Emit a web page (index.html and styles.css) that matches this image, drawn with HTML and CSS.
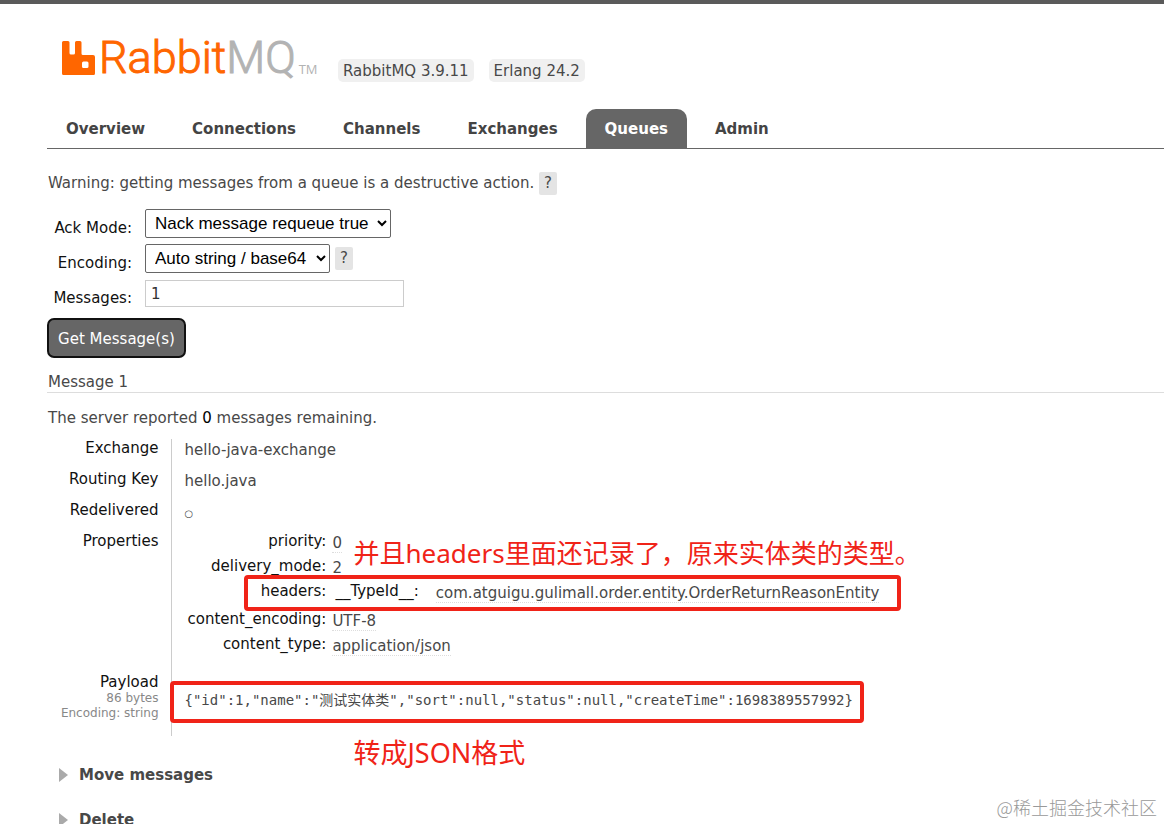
FILE: index.html
```html
<!DOCTYPE html>
<html lang="en">
<head>
<meta charset="utf-8">
<title>RabbitMQ Management</title>
<link rel="stylesheet" href="styles.css">
</head>
<body>
<header class="header">
  <a class="logo" href="#" aria-label="RabbitMQ">
    <svg class="logo-mark" viewBox="0 0 33 34" width="33" height="34" aria-hidden="true">
      <path fill="#ff6600" fill-rule="evenodd" d="M1.500 0H6Q7.500 0 7.500 1.500V12Q7.500 13.500 9 13.500H11.500Q13 13.500 13 12V1.500Q13 0 14.500 0H18Q19.500 0 19.500 1.500V12.500Q19.500 14 21 14H31Q33 14 33 16V32.500Q33 34 31.500 34H1.500Q0 34 0 32.500V1.500Q0 0 1.500 0ZM21.500 20.500Q20 20.500 20 22V25.500Q20 27 21.500 27H25Q26.500 27 26.500 25.500V22Q26.500 20.500 25 20.500Z"/>
    </svg>
    <span class="logo-text">Rabbit<span class="logo-mq">MQ</span></span>
    <span class="logo-tm">TM</span>
  </a>
  <div class="versions"><span class="version">RabbitMQ 3.9.11</span><span class="version">Erlang 24.2</span></div>
</header>
<nav class="tabs">
  <a class="tab" href="#">Overview</a>
  <a class="tab" href="#">Connections</a>
  <a class="tab" href="#">Channels</a>
  <a class="tab" href="#">Exchanges</a>
  <a class="tab tab-selected" href="#">Queues</a>
  <a class="tab" href="#">Admin</a>
</nav>
<main class="main">
  <p class="warning">Warning: getting messages from a queue is a destructive action. <button class="help" type="button">?</button></p>
  <form class="form">
    <div class="fields">
      <label for="ack">Ack Mode:</label>
      <div class="field"><select id="ack"><option>Nack message requeue true</option></select></div>
      <label for="enc">Encoding:</label>
      <div class="field"><select id="enc"><option>Auto string / base64</option></select><button class="help" type="button">?</button></div>
      <label for="count">Messages:</label>
      <div class="field"><input id="count" type="text" value="1"></div>
    </div>
    <button class="submit" type="button">Get Message(s)</button>
  </form>
  <h3 class="message-title">Message 1</h3>
  <p class="remaining">The server reported <b>0</b> messages remaining.</p>
  <table class="facts">
    <tr><th>Exchange</th><td>hello-java-exchange</td></tr>
    <tr><th>Routing Key</th><td>hello.java</td></tr>
    <tr><th>Redelivered</th><td><span class="ring">○</span></td></tr>
    <tr><th>Properties</th><td class="nested">
      <table class="props">
        <tr><th>priority:</th><td><abbr>0</abbr></td></tr>
        <tr><th>delivery_mode:</th><td><abbr>2</abbr></td></tr>
        <tr class="headers-row"><th>headers:</th><td class="nested">
          <table class="props"><tr><th>__TypeId__:</th><td><abbr>com.atguigu.gulimall.order.entity.OrderReturnReasonEntity</abbr></td></tr></table>
        </td></tr>
        <tr><th>content_encoding:</th><td><abbr>UTF-8</abbr></td></tr>
        <tr><th>content_type:</th><td><abbr>application/json</abbr></td></tr>
      </table>
      <span class="frame frame-headers"></span>
      <span class="note note-headers">并且headers里面还记录了，原来实体类的类型。</span>
    </td></tr>
    <tr class="payload-row"><th>Payload<small>86 bytes</small><small>Encoding: string</small></th><td class="payload-cell">
      <pre class="payload">{"id":1,"name":"测试实体类","sort":null,"status":null,"createTime":1698389557992}</pre>
      <span class="frame frame-payload"></span>
      <span class="note note-payload">转成JSON格式</span>
    </td></tr>
  </table>
  <h2 class="section">Move messages</h2>
  <h2 class="section">Delete</h2>
</main>
<div class="watermark">@稀土掘金技术社区</div>
</body>
</html>
```
FILE: styles.css
```css
* { box-sizing: border-box; }
html { height: 100%; overflow: hidden; }
body {
  margin: 0;
  height: 100%;
  overflow: hidden;
  padding-left: 47px;
  border-top: 4px solid #5a5a5a;
  background: #fff;
  color: #484848;
  font: 15px/18px Verdana, "DejaVu Sans", "Noto Sans CJK SC", sans-serif;
}
p, h2, h3, pre { margin: 0; font-size: 15px; }

.header { display: flex; align-items: flex-end; padding: 28px 0 0 15px; height: 78px; }
.logo { display: flex; align-items: flex-end; text-decoration: none; width: 261px; margin-right: 15px; }
.logo-mark { margin: 0 4px 7px 0; flex: none; }
.logo-text { font: 300 45px/48px "Roboto", sans-serif; color: #ff6600; -webkit-text-stroke: 1px; }
.logo-mq { color: #b3b3b3; }
.logo-tm { font: 13px/16px "Open Sans", sans-serif; color: #b3b3b3; margin: 0 0 5px 3px; }
.versions { display: flex; gap: 15px; }
.version { background: #f0f0f0; border-radius: 5px; padding: 4px 5px 2px; line-height: 17px; }

.tabs { display: flex; align-items: flex-end; border-bottom: 1px solid #666; margin-top: 27px; }
.tab { padding: 11px 19px 10px; margin-right: 9px; color: #444; font-weight: bold; text-decoration: none; border-radius: 10px 10px 0 0; }
.tab-selected { background: #666; color: #fff; }

.main { padding-left: 1px; }
.warning { padding-top: 23px; line-height: 23px; }
.help { border: 0; border-radius: 2px; background: #e4e4e4; color: #484848; font: 15px/19px Verdana, "DejaVu Sans", sans-serif; width: 18px; height: 23px; padding: 2px 0; }
.fields { display: grid; grid-template-columns: 84px 1fr; grid-auto-rows: 35px; column-gap: 13px; margin-top: 11px; }
.fields label { color: #111; text-align: right; padding-top: 13px; }
.field { display: flex; align-items: center; gap: 5px; }
select { height: 29px; border: 1px solid #666; border-radius: 2px; background: #fff; color: #000; font: 17px "Liberation Sans", Arial, sans-serif; padding: 0 0 0 5px; }
#ack { width: 246px; }
#enc { width: 185px; }
input { width: 259px; height: 27px; border: 1px solid #ccc; padding: 2px 5px; color: #333; font: 15px Verdana, "DejaVu Sans", sans-serif; }
.submit { margin: 7px 0 0 -1px; height: 40px; width: 139px; padding: 2px 0 0; border: 2px solid #111; border-radius: 7px; background: #666; color: #fff; font: 15px Verdana, "DejaVu Sans", sans-serif; }
.message-title { font-weight: normal; margin: 15px 0 0 -1px; padding: 0 0 1px 1px; border-bottom: 1px solid #ddd; }
.remaining { margin-top: 16px; }
.remaining b { font-weight: normal; color: #000; }

table { border-collapse: collapse; }
th, td { padding: 0; vertical-align: top; font-weight: normal; }
th { color: #111; text-align: right; }
.facts { margin-top: 12px; }
.facts > tbody > tr { height: 31px; }
.facts > tbody > tr > th { width: 123px; padding-right: 12px; border-right: 1px solid #ccc; }
.facts > tbody > tr > td { padding: 2px 0 0 13px; position: relative; }
.facts td.nested { padding: 0; }
.facts > tbody > tr > td.nested { padding: 0 0 13px 16px; }
.props tr { height: 25px; }
.props .headers-row { height: 28px; }
.props td { padding: 2px 0 0 6px; }
.props .props { margin-left: 9px; }
.props .props td { padding-left: 17px; }
abbr { border-bottom: 1px dotted #ddd; }
.ring { font-size: 10px; }
small { display: block; color: #888; font-size: 12px; line-height: 15px; }
.facts > tbody > .payload-row { height: 63px; }
.facts > tbody > tr > .payload-cell { padding-top: 18px; }
.payload { font: 14px/18px "DejaVu Sans Mono", "Noto Sans CJK SC", monospace; }

.frame { position: absolute; border: 4px solid #f02318; border-radius: 4px; }
.frame-headers { left: 72px; top: 43px; width: 657px; height: 36px; }
.frame-payload { left: -2px; top: 8px; width: 694px; height: 42px; }
.note { position: absolute; left: 182px; color: #f02318; font: 26px/32px "Noto Sans", "Noto Sans CJK SC", sans-serif; white-space: nowrap; }
.note-headers { top: 5px; }
.note-payload { top: 64px; font-size: 27px; }

.section { display: flex; align-items: center; gap: 11px; margin: 30px 0 0 11px; line-height: 18px; }
.section + .section { margin-top: 27px; }
.section::before { content: ""; border-left: 9px solid #aaa; border-top: 7px solid transparent; border-bottom: 7px solid transparent; }
.watermark { position: absolute; right: 7px; bottom: 4px; color: #999; font: 300 18px/26px "Noto Sans CJK SC", sans-serif; }
```
